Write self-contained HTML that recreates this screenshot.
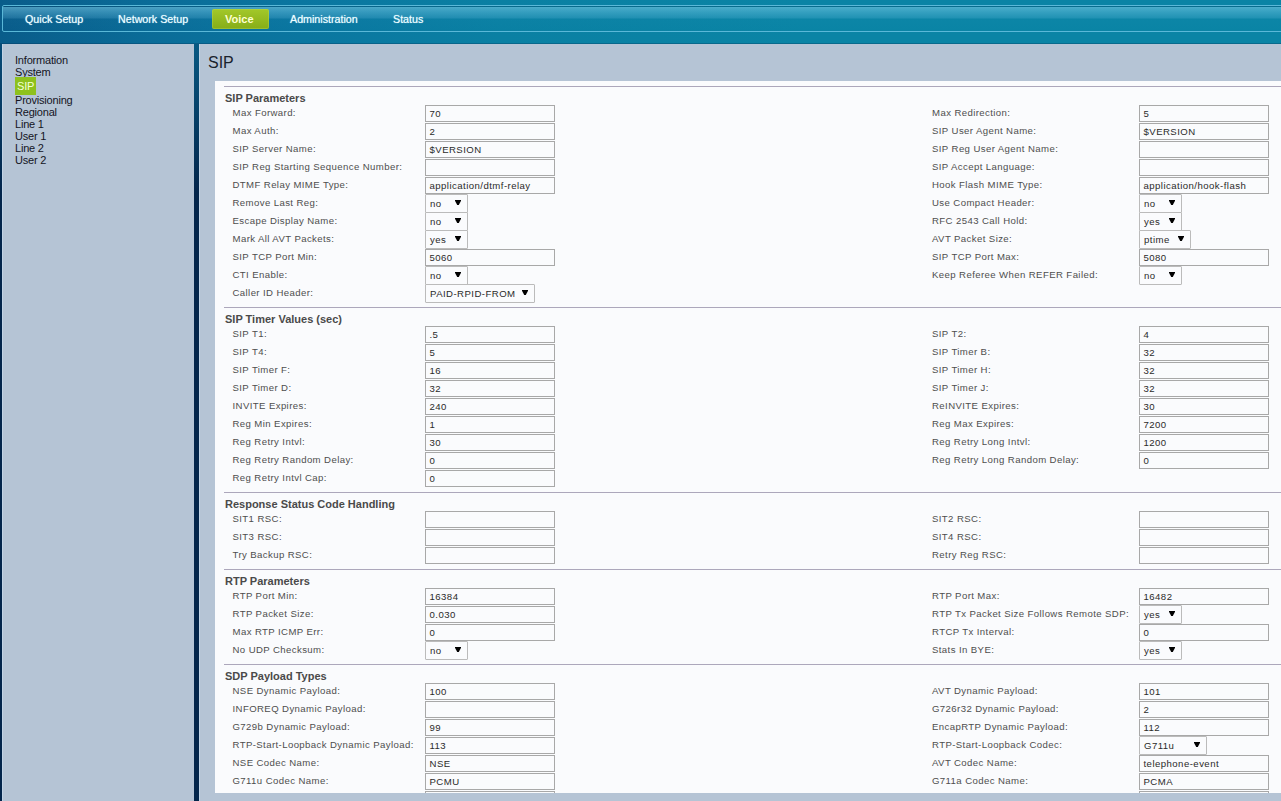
<!DOCTYPE html>
<html><head><meta charset="utf-8">
<style>
html,body{margin:0;padding:0}
body{width:1281px;height:801px;overflow:hidden;position:relative;font-family:"Liberation Sans",sans-serif;
 background:linear-gradient(to right,#095c8a 0px,#0a6c98 150px,#0a76a0 300px,#0a80a3 500px,#0a84a5 800px,#0a84a5 1281px);}
#bgdark{position:absolute;left:0;top:43px;width:1281px;height:758px;background:linear-gradient(to bottom,rgba(3,37,75,0.25) 0px,rgba(3,37,75,0.3) 1px,rgba(3,37,75,1) 150px)}
#nav{position:absolute;left:2px;top:5px;width:1300px;height:25px;border:1px solid #5ab8d8;border-radius:2px;
 background:linear-gradient(to bottom,rgba(0,40,70,0.25) 0px,rgba(0,40,70,0.25) 1px,rgba(140,215,240,0.5) 1px,rgba(130,210,240,0.36) 6px,rgba(120,200,235,0.2) 12px,rgba(120,200,235,0.02) 13px,rgba(0,0,0,0) 25px)}
.nv{position:absolute;top:13px;font-size:10.7px;line-height:13px;color:#effdff;white-space:nowrap;text-shadow:0 0 1px rgba(190,240,255,0.9)}
#voice{position:absolute;left:212px;top:9px;width:57px;height:20px;border-radius:2px;background:linear-gradient(to bottom,#a3c829,#86ad18);box-shadow:inset 0 0 0 1px rgba(190,220,90,0.35)}
#voice span{position:absolute;left:13px;top:4px;font-weight:bold;font-size:11px;line-height:13px;color:#ffffd0}
#side{position:absolute;left:2px;top:44px;width:192px;height:757px;background:#b5c4d5;box-shadow:inset 1px 0 0 #c2d4e6}
.sl{position:absolute;left:13px;font-size:11px;line-height:12px;color:#14141e;white-space:nowrap;letter-spacing:-0.2px}
#sipsel{position:absolute;left:13px;top:33px;width:21px;height:18px;background:#8ec11d}
#content{position:absolute;left:199px;top:44px;width:1082px;height:757px;background:#b5c4d5;box-shadow:inset 1px 0 0 #c2d4e6}
#title{position:absolute;left:208px;top:54px;font-size:16px;line-height:18px;color:#1a222c}
#panel{position:absolute;left:215px;top:81px;width:1066px;height:712px;background:#fafbfd}
.hr{position:absolute;left:224px;width:1057px;height:1px;background:#aca7bb}
.h{position:absolute;left:225px;font-weight:bold;font-size:11px;line-height:13px;color:#4a4a4a;white-space:nowrap}
.l{position:absolute;font-size:9.6px;line-height:12px;color:#4e4e4e;white-space:nowrap;letter-spacing:0.4px}
.in{position:absolute;box-sizing:border-box;width:130px;height:17px;border:1px solid #a8a8a8;background:#fafbfd;padding-left:3.5px;padding-top:1px;font-size:9.6px;line-height:13px;color:#2a2a2a;white-space:nowrap;overflow:hidden;letter-spacing:0.45px}
.se{position:absolute;box-sizing:border-box;height:19px;border:1px solid #bbbbbb;border-radius:1px;background:#fafbfd;padding-left:4px;padding-top:1px;font-size:9.6px;line-height:15px;color:#2a2a2a;white-space:nowrap;letter-spacing:0.45px}
.ar{position:absolute;right:6px;top:5px;fill:#000}
#clip{position:absolute;left:0;top:0;width:1281px;height:793px;overflow:hidden}
</style></head><body>
<div id="bgdark"></div>
<div id="nav"></div>
<div class="nv" style="left:25px">Quick Setup</div>
<div class="nv" style="left:118px">Network Setup</div>
<div id="voice"><span>Voice</span></div>
<div class="nv" style="left:290px">Administration</div>
<div class="nv" style="left:393px">Status</div>
<div id="side">
<div class="sl" style="top:10px">Information</div>
<div class="sl" style="top:22px">System</div>
<div id="sipsel"></div>
<div class="sl" style="top:36px;left:15px;color:#f4ffd8">SIP</div>
<div class="sl" style="top:50px">Provisioning</div>
<div class="sl" style="top:62px">Regional</div>
<div class="sl" style="top:74px">Line 1</div>
<div class="sl" style="top:86px">User 1</div>
<div class="sl" style="top:98px">Line 2</div>
<div class="sl" style="top:110px">User 2</div>
</div>
<div id="content"></div>
<div id="title">SIP</div>
<div id="panel"></div>
<div id="clip">
<div class="hr" style="top:86px"></div>
<div class="h" style="top:92px">SIP Parameters</div>
<div class="l" style="left:232.5px;top:107px">Max Forward:</div>
<div class="in" style="left:425px;top:105px">70</div>
<div class="l" style="left:932px;top:107px">Max Redirection:</div>
<div class="in" style="left:1139px;top:105px">5</div>
<div class="l" style="left:232.5px;top:125px">Max Auth:</div>
<div class="in" style="left:425px;top:123px">2</div>
<div class="l" style="left:932px;top:125px">SIP User Agent Name:</div>
<div class="in" style="left:1139px;top:123px">$VERSION</div>
<div class="l" style="left:232.5px;top:143px">SIP Server Name:</div>
<div class="in" style="left:425px;top:141px">$VERSION</div>
<div class="l" style="left:932px;top:143px">SIP Reg User Agent Name:</div>
<div class="in" style="left:1139px;top:141px"></div>
<div class="l" style="left:232.5px;top:161px">SIP Reg Starting Sequence Number:</div>
<div class="in" style="left:425px;top:159px"></div>
<div class="l" style="left:932px;top:161px">SIP Accept Language:</div>
<div class="in" style="left:1139px;top:159px"></div>
<div class="l" style="left:232.5px;top:179px">DTMF Relay MIME Type:</div>
<div class="in" style="left:425px;top:177px">application/dtmf-relay</div>
<div class="l" style="left:932px;top:179px">Hook Flash MIME Type:</div>
<div class="in" style="left:1139px;top:177px">application/hook-flash</div>
<div class="l" style="left:232.5px;top:197px">Remove Last Reg:</div>
<div class="se" style="left:425px;top:194px;width:43px">no<svg class="ar" width="6" height="5" viewBox="0 0 6 5"><path d="M0 0H6V0.8L3.8 5H2.2L0 0.8Z"/></svg></div>
<div class="l" style="left:932px;top:197px">Use Compact Header:</div>
<div class="se" style="left:1139px;top:194px;width:43px">no<svg class="ar" width="6" height="5" viewBox="0 0 6 5"><path d="M0 0H6V0.8L3.8 5H2.2L0 0.8Z"/></svg></div>
<div class="l" style="left:232.5px;top:215px">Escape Display Name:</div>
<div class="se" style="left:425px;top:212px;width:43px">no<svg class="ar" width="6" height="5" viewBox="0 0 6 5"><path d="M0 0H6V0.8L3.8 5H2.2L0 0.8Z"/></svg></div>
<div class="l" style="left:932px;top:215px">RFC 2543 Call Hold:</div>
<div class="se" style="left:1139px;top:212px;width:43px">yes<svg class="ar" width="6" height="5" viewBox="0 0 6 5"><path d="M0 0H6V0.8L3.8 5H2.2L0 0.8Z"/></svg></div>
<div class="l" style="left:232.5px;top:233px">Mark All AVT Packets:</div>
<div class="se" style="left:425px;top:230px;width:43px">yes<svg class="ar" width="6" height="5" viewBox="0 0 6 5"><path d="M0 0H6V0.8L3.8 5H2.2L0 0.8Z"/></svg></div>
<div class="l" style="left:932px;top:233px">AVT Packet Size:</div>
<div class="se" style="left:1139px;top:230px;width:52px">ptime<svg class="ar" width="6" height="5" viewBox="0 0 6 5"><path d="M0 0H6V0.8L3.8 5H2.2L0 0.8Z"/></svg></div>
<div class="l" style="left:232.5px;top:251px">SIP TCP Port Min:</div>
<div class="in" style="left:425px;top:249px">5060</div>
<div class="l" style="left:932px;top:251px">SIP TCP Port Max:</div>
<div class="in" style="left:1139px;top:249px">5080</div>
<div class="l" style="left:232.5px;top:269px">CTI Enable:</div>
<div class="se" style="left:425px;top:266px;width:43px">no<svg class="ar" width="6" height="5" viewBox="0 0 6 5"><path d="M0 0H6V0.8L3.8 5H2.2L0 0.8Z"/></svg></div>
<div class="l" style="left:932px;top:269px">Keep Referee When REFER Failed:</div>
<div class="se" style="left:1139px;top:266px;width:43px">no<svg class="ar" width="6" height="5" viewBox="0 0 6 5"><path d="M0 0H6V0.8L3.8 5H2.2L0 0.8Z"/></svg></div>
<div class="l" style="left:232.5px;top:287px">Caller ID Header:</div>
<div class="se" style="left:425px;top:284px;width:110px">PAID-RPID-FROM<svg class="ar" width="6" height="5" viewBox="0 0 6 5"><path d="M0 0H6V0.8L3.8 5H2.2L0 0.8Z"/></svg></div>
<div class="hr" style="top:307px"></div>
<div class="h" style="top:313px">SIP Timer Values (sec)</div>
<div class="l" style="left:232.5px;top:328px">SIP T1:</div>
<div class="in" style="left:425px;top:326px">.5</div>
<div class="l" style="left:932px;top:328px">SIP T2:</div>
<div class="in" style="left:1139px;top:326px">4</div>
<div class="l" style="left:232.5px;top:346px">SIP T4:</div>
<div class="in" style="left:425px;top:344px">5</div>
<div class="l" style="left:932px;top:346px">SIP Timer B:</div>
<div class="in" style="left:1139px;top:344px">32</div>
<div class="l" style="left:232.5px;top:364px">SIP Timer F:</div>
<div class="in" style="left:425px;top:362px">16</div>
<div class="l" style="left:932px;top:364px">SIP Timer H:</div>
<div class="in" style="left:1139px;top:362px">32</div>
<div class="l" style="left:232.5px;top:382px">SIP Timer D:</div>
<div class="in" style="left:425px;top:380px">32</div>
<div class="l" style="left:932px;top:382px">SIP Timer J:</div>
<div class="in" style="left:1139px;top:380px">32</div>
<div class="l" style="left:232.5px;top:400px">INVITE Expires:</div>
<div class="in" style="left:425px;top:398px">240</div>
<div class="l" style="left:932px;top:400px">ReINVITE Expires:</div>
<div class="in" style="left:1139px;top:398px">30</div>
<div class="l" style="left:232.5px;top:418px">Reg Min Expires:</div>
<div class="in" style="left:425px;top:416px">1</div>
<div class="l" style="left:932px;top:418px">Reg Max Expires:</div>
<div class="in" style="left:1139px;top:416px">7200</div>
<div class="l" style="left:232.5px;top:436px">Reg Retry Intvl:</div>
<div class="in" style="left:425px;top:434px">30</div>
<div class="l" style="left:932px;top:436px">Reg Retry Long Intvl:</div>
<div class="in" style="left:1139px;top:434px">1200</div>
<div class="l" style="left:232.5px;top:454px">Reg Retry Random Delay:</div>
<div class="in" style="left:425px;top:452px">0</div>
<div class="l" style="left:932px;top:454px">Reg Retry Long Random Delay:</div>
<div class="in" style="left:1139px;top:452px">0</div>
<div class="l" style="left:232.5px;top:472px">Reg Retry Intvl Cap:</div>
<div class="in" style="left:425px;top:470px">0</div>
<div class="hr" style="top:492px"></div>
<div class="h" style="top:498px">Response Status Code Handling</div>
<div class="l" style="left:232.5px;top:513px">SIT1 RSC:</div>
<div class="in" style="left:425px;top:511px"></div>
<div class="l" style="left:932px;top:513px">SIT2 RSC:</div>
<div class="in" style="left:1139px;top:511px"></div>
<div class="l" style="left:232.5px;top:531px">SIT3 RSC:</div>
<div class="in" style="left:425px;top:529px"></div>
<div class="l" style="left:932px;top:531px">SIT4 RSC:</div>
<div class="in" style="left:1139px;top:529px"></div>
<div class="l" style="left:232.5px;top:549px">Try Backup RSC:</div>
<div class="in" style="left:425px;top:547px"></div>
<div class="l" style="left:932px;top:549px">Retry Reg RSC:</div>
<div class="in" style="left:1139px;top:547px"></div>
<div class="hr" style="top:569px"></div>
<div class="h" style="top:575px">RTP Parameters</div>
<div class="l" style="left:232.5px;top:590px">RTP Port Min:</div>
<div class="in" style="left:425px;top:588px">16384</div>
<div class="l" style="left:932px;top:590px">RTP Port Max:</div>
<div class="in" style="left:1139px;top:588px">16482</div>
<div class="l" style="left:232.5px;top:608px">RTP Packet Size:</div>
<div class="in" style="left:425px;top:606px">0.030</div>
<div class="l" style="left:932px;top:608px">RTP Tx Packet Size Follows Remote SDP:</div>
<div class="se" style="left:1139px;top:605px;width:43px">yes<svg class="ar" width="6" height="5" viewBox="0 0 6 5"><path d="M0 0H6V0.8L3.8 5H2.2L0 0.8Z"/></svg></div>
<div class="l" style="left:232.5px;top:626px">Max RTP ICMP Err:</div>
<div class="in" style="left:425px;top:624px">0</div>
<div class="l" style="left:932px;top:626px">RTCP Tx Interval:</div>
<div class="in" style="left:1139px;top:624px">0</div>
<div class="l" style="left:232.5px;top:644px">No UDP Checksum:</div>
<div class="se" style="left:425px;top:641px;width:43px">no<svg class="ar" width="6" height="5" viewBox="0 0 6 5"><path d="M0 0H6V0.8L3.8 5H2.2L0 0.8Z"/></svg></div>
<div class="l" style="left:932px;top:644px">Stats In BYE:</div>
<div class="se" style="left:1139px;top:641px;width:43px">yes<svg class="ar" width="6" height="5" viewBox="0 0 6 5"><path d="M0 0H6V0.8L3.8 5H2.2L0 0.8Z"/></svg></div>
<div class="hr" style="top:664px"></div>
<div class="h" style="top:670px">SDP Payload Types</div>
<div class="l" style="left:232.5px;top:685px">NSE Dynamic Payload:</div>
<div class="in" style="left:425px;top:683px">100</div>
<div class="l" style="left:932px;top:685px">AVT Dynamic Payload:</div>
<div class="in" style="left:1139px;top:683px">101</div>
<div class="l" style="left:232.5px;top:703px">INFOREQ Dynamic Payload:</div>
<div class="in" style="left:425px;top:701px"></div>
<div class="l" style="left:932px;top:703px">G726r32 Dynamic Payload:</div>
<div class="in" style="left:1139px;top:701px">2</div>
<div class="l" style="left:232.5px;top:721px">G729b Dynamic Payload:</div>
<div class="in" style="left:425px;top:719px">99</div>
<div class="l" style="left:932px;top:721px">EncapRTP Dynamic Payload:</div>
<div class="in" style="left:1139px;top:719px">112</div>
<div class="l" style="left:232.5px;top:739px">RTP-Start-Loopback Dynamic Payload:</div>
<div class="in" style="left:425px;top:737px">113</div>
<div class="l" style="left:932px;top:739px">RTP-Start-Loopback Codec:</div>
<div class="se" style="left:1139px;top:736px;width:68px">G711u<svg class="ar" width="6" height="5" viewBox="0 0 6 5"><path d="M0 0H6V0.8L3.8 5H2.2L0 0.8Z"/></svg></div>
<div class="l" style="left:232.5px;top:757px">NSE Codec Name:</div>
<div class="in" style="left:425px;top:755px">NSE</div>
<div class="l" style="left:932px;top:757px">AVT Codec Name:</div>
<div class="in" style="left:1139px;top:755px">telephone-event</div>
<div class="l" style="left:232.5px;top:775px">G711u Codec Name:</div>
<div class="in" style="left:425px;top:773px">PCMU</div>
<div class="l" style="left:932px;top:775px">G711a Codec Name:</div>
<div class="in" style="left:1139px;top:773px">PCMA</div>
<div class="in" style="left:425px;top:791px"></div>
<div class="in" style="left:1139px;top:791px"></div>
</div>
</body></html>
